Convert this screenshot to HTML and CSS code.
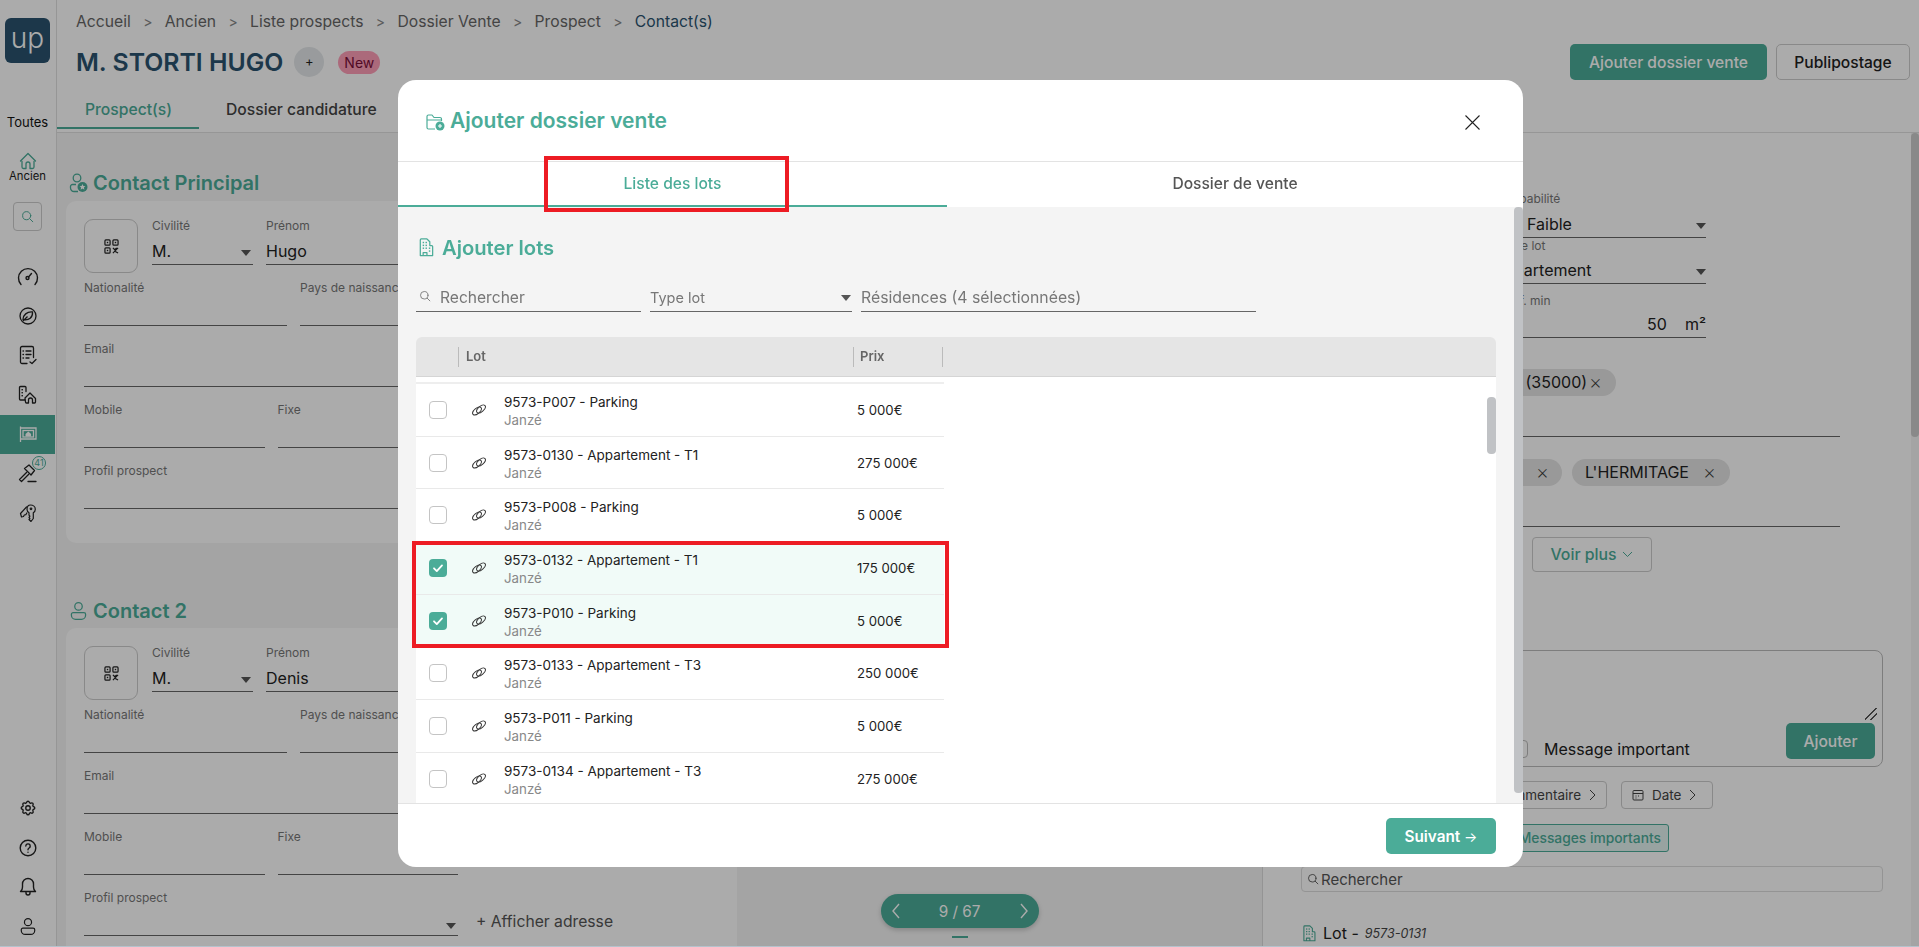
FILE: index.html
```html
<!DOCTYPE html>
<html lang="fr">
<head>
<meta charset="utf-8">
<title>Ajouter dossier vente</title>
<link rel="stylesheet" href="styles.css">
</head>
<body>
<svg class="defs" width="0" height="0">
  <defs>
    <symbol id="link" viewBox="0 0 16 16"><g fill="none" stroke="currentColor" stroke-width=".95"><ellipse cx="6" cy="9" rx="5.200" ry="2.700" transform="rotate(-40 6 9)"/><ellipse cx="10" cy="7" rx="5.200" ry="2.700" transform="rotate(-40 10 7)"/></g></symbol>
    <symbol id="check" viewBox="0 0 18 18"><path d="M5 9.3l2.8 2.8L13 6.4" fill="none" stroke="#fff" stroke-width="1.8" stroke-linecap="round" stroke-linejoin="round"/></symbol>
    <symbol id="qr" viewBox="0 0 16 16"><g fill="none" stroke="currentColor" stroke-width="1.3"><rect x="1" y="1" width="5.5" height="5.5" rx="1"/><rect x="9.5" y="1" width="5.5" height="5.5" rx="1"/><rect x="1" y="9.5" width="5.5" height="5.5" rx="1"/><path d="M9.5 9.5l2 2 2-2M15 9.5l-3.5 3.5M9.5 15l2-2 3.5 2"/></g><g fill="currentColor"><rect x="3" y="3" width="1.5" height="1.5"/><rect x="11.5" y="3" width="1.5" height="1.5"/><rect x="3" y="11.5" width="1.5" height="1.5"/></g></symbol>
    <symbol id="building" viewBox="0 0 16 20"><g fill="none" stroke="currentColor" stroke-width="1.3" stroke-linejoin="round"><path d="M2 18.5V2a1 1 0 0 1 1-1h6l3 3v4h2a1 1 0 0 1 1 1v9.500zM5 18.500v-3h4v3"/></g><g fill="currentColor"><rect x="4.500" y="4" width="1.500" height="1.500"/><rect x="7.500" y="4" width="1.500" height="1.500"/><rect x="4.500" y="7" width="1.500" height="1.500"/><rect x="7.500" y="7" width="1.500" height="1.500"/><rect x="4.500" y="10" width="1.500" height="1.500"/><rect x="7.500" y="10" width="1.500" height="1.500"/><rect x="11" y="10" width="1.500" height="1.500"/><rect x="11" y="13" width="1.500" height="1.500"/></g></symbol>
    <symbol id="user" viewBox="0 0 20 24"><g fill="none" stroke="currentColor" stroke-width="1.500"><circle cx="10" cy="6.500" r="4.500"/><path d="M3.500 14h13a2 2 0 0 1 2 2v1a5 5 0 0 1-5 5h-7a5 5 0 0 1-5-5v-1a2 2 0 0 1 2-2z"/></g></symbol>
    <symbol id="search" viewBox="0 0 16 16"><g fill="none" stroke="currentColor" stroke-width="1.200" stroke-linecap="round"><circle cx="7" cy="7" r="5"/><path d="M11 11l3.500 3.500"/></g></symbol>
  </defs>
</svg>

<div class="app">
  <aside class="side">
    <div class="logo">up</div>
    <div class="side-all">Toutes</div>
    <svg class="side-home" width="18" height="18" viewBox="0 0 18 18"><path d="M3 9.500V15a1.500 1.500 0 0 0 1.500 1.500h2.500V12a2 2 0 0 1 4 0v4.500h2.500A1.500 1.500 0 0 0 15 15V9.500M1.500 9 9 1.500 16.500 9" fill="none" stroke="#4bac98" stroke-width="1.300" stroke-linecap="round" stroke-linejoin="round"/></svg>
    <div class="side-label">Ancien</div>
    <div class="side-search"><svg width="13" height="13"><use href="#search"/></svg></div>
    <nav class="side-nav">
      <div class="nav-item"><svg width="22" height="20" viewBox="0 0 22 20"><g fill="none" stroke="currentColor" stroke-width="1.400" stroke-linecap="round"><path d="M4 17.500A9.500 9.500 0 1 1 18 17.500"/><circle cx="10.500" cy="11" r="1.500"/><path d="M11.500 10l3-3.500"/></g></svg></div>
      <div class="nav-item"><svg width="20" height="20" viewBox="0 0 20 20"><g fill="none" stroke="currentColor" stroke-width="1.300"><circle cx="10" cy="10" r="8"/><path d="M5 13.500C5 9 9 5.500 14.500 6 15 11 11 15 5 13.500zM5 15l4.500-4.500"/></g></svg></div>
      <div class="nav-item"><svg width="18" height="20" viewBox="0 0 18 20"><g fill="none" stroke="currentColor" stroke-width="1.300" stroke-linecap="round" stroke-linejoin="round"><path d="M8 18.500H3a1.500 1.500 0 0 1-1.500-1.500V3A1.500 1.500 0 0 1 3 1.500h10A1.500 1.500 0 0 1 14.500 3v9.500M7 6h5M7 9.500h5M7 13h3M11 17l2 1.500 4-4"/><path d="M4 6h.5M4 9.500h.5M4 13h.5"/></g></svg></div>
      <div class="nav-item"><svg width="19" height="19" viewBox="0 0 19 19"><g fill="none" stroke="currentColor" stroke-width="1.300" stroke-linecap="round" stroke-linejoin="round"><path d="M8 6.500V2.500a1 1 0 0 0-1-1H2.500a1 1 0 0 0-1 1V14a1 1 0 0 0 1 1h4M7 13l5-5 5.500 5.500v3.500a1 1 0 0 1-1 1h-2v-3a2 2 0 0 0-4 0v3h-2a1 1 0 0 1-1-1z"/></g><g fill="currentColor"><rect x="3.500" y="4" width="1.400" height="1.400"/><rect x="3.500" y="7" width="1.400" height="1.400"/><rect x="3.500" y="10" width="1.400" height="1.400"/></g></svg></div>
      <div class="nav-item nav-active"><svg width="18" height="18" viewBox="0 0 18 18"><g fill="none" stroke="currentColor" stroke-width="1.300"><path d="M1.500 17V1.500M1.500 3h15.500v11H1.500"/><rect x="4" y="5.500" width="10.500" height="6.500"/></g><path d="M9.300 6.500 6.500 9v2.500h5.600V9z" fill="currentColor"/></svg></div>
      <div class="nav-item nav-badge-host"><svg width="19" height="19" viewBox="0 0 19 19"><g fill="none" stroke="currentColor" stroke-width="1.300" stroke-linecap="round" stroke-linejoin="round"><path d="M6.500 4.500 11 1l5.500 5.500-3.500 4.500zM8.500 8.500l-7 7 2 2 7-7M10 17.500h8"/></g></svg><span class="nav-badge">41</span></div>
      <div class="nav-item"><svg width="18" height="18" viewBox="0 0 18 18"><g fill="none" stroke="currentColor" stroke-width="1.200" stroke-linejoin="round" stroke-linecap="round"><path d="M11.500 1c2.600 0 4.800 1.900 4.800 4.300 0 1.500-.8 2.700-2 3.400v5.800l-2.300 3-2-2 .9-1.100-.9-1 .9-1.200-.9-1V8.700c-1.200-.7-2-1.900-2-3.400C8 2.900 9 1 11.500 1z"/><path d="M7.500 3 1.500 9.500l1 3.500 2-.5.800-1.500 1.500-.3 1-1.700"/><circle cx="12" cy="4.800" r=".8"/></g></svg></div>
    </nav>
    <div class="side-bottom">
      <div class="nav-item"><svg width="18" height="18" viewBox="0 0 24 24"><g fill="none" stroke="currentColor" stroke-width="1.800" stroke-linejoin="round"><path d="M10.300 4.300c.4-1.800 3-1.800 3.400 0a1.700 1.700 0 0 0 2.600 1.100c1.500-.9 3.300.8 2.400 2.400a1.700 1.700 0 0 0 1 2.500c1.800.4 1.800 3 0 3.400a1.700 1.700 0 0 0-1 2.600c.9 1.500-.9 3.300-2.400 2.400a1.700 1.700 0 0 0-2.600 1c-.4 1.800-3 1.800-3.400 0a1.700 1.700 0 0 0-2.600-1c-1.500.9-3.300-.9-2.400-2.400a1.700 1.700 0 0 0-1-2.600c-1.800-.4-1.800-3 0-3.400a1.700 1.700 0 0 0 1-2.500c-.9-1.600.9-3.300 2.400-2.400a1.700 1.700 0 0 0 2.600-1.100z"/><circle cx="12" cy="12" r="3"/></g></svg></div>
      <div class="nav-item"><svg width="18" height="18" viewBox="0 0 18 18"><g fill="none" stroke="currentColor" stroke-width="1.400" stroke-linecap="round"><circle cx="9" cy="9" r="7.800"/><path d="M6.800 7a2.200 2.200 0 1 1 3.300 2c-.8.500-1.100.9-1.100 1.700M9 13.200v.1"/></g></svg></div>
      <div class="nav-item"><svg width="18" height="19" viewBox="0 0 18 19"><g fill="none" stroke="currentColor" stroke-width="1.400" stroke-linecap="round" stroke-linejoin="round"><path d="M1.500 14.500c1.500-1 2-2.500 2-4.500V7a5.500 5.500 0 0 1 11 0v3c0 2 .5 3.500 2 4.500zM7 15v1a2 2 0 0 0 4 0v-1"/></g></svg></div>
      <div class="nav-item"><svg width="16" height="19"><use href="#user"/></svg></div>
    </div>
  </aside>

  <main class="main">
    <header class="top">
      <div class="crumbs">
        <span>Accueil</span><i>&gt;</i><span>Ancien</span><i>&gt;</i><span>Liste prospects</span><i>&gt;</i><span>Dossier Vente</span><i>&gt;</i><span>Prospect</span><i>&gt;</i><span class="crumb-last">Contact(s)</span>
      </div>
      <div class="title-row">
        <h1>M. STORTI HUGO</h1>
        <span class="round-plus">+</span>
        <span class="pill-new">New</span>
        <span class="title-actions">
          <button class="btn btn-fill">Ajouter dossier vente</button>
          <button class="btn btn-line">Publipostage</button>
        </span>
      </div>
      <div class="page-tabs">
        <span class="page-tab page-tab-on">Prospect(s)</span>
        <span class="page-tab">Dossier candidature</span>
      </div>
    </header>

    <div class="content">
      <section class="col-left">
        <h2 class="contact-h"><svg width="19" height="20" viewBox="0 0 19 20"><g fill="none" stroke="currentColor" stroke-width="1.300"><circle cx="8" cy="5" r="3.800"/><path d="M7 11.500H3.500a2 2 0 0 0-2 2v1.500a3.500 3.500 0 0 0 3.500 3.500h4"/></g><circle cx="13.500" cy="14" r="5" fill="currentColor"/><path d="M13.500 11l.9 2 2.100.2-1.600 1.400.5 2.100-1.900-1.100-1.900 1.100.5-2.100-1.600-1.400 2.100-.2z" fill="#fff"/></svg>Contact Principal</h2>
        <div class="card">
          <div class="c-row c-first">
            <div class="qr"><svg width="15" height="15"><use href="#qr"/></svg></div>
            <div class="field f-civ"><label>Civilité</label><div class="val">M.<b class="caret"></b></div></div>
            <div class="field f-pre"><label>Prénom</label><div class="val">Hugo</div></div>
          </div>
          <div class="c-row"><div class="field f-nat"><label>Nationalité</label></div><div class="field f-pays"><label>Pays de naissance</label></div></div>
          <div class="c-row"><div class="field f-full"><label>Email</label></div></div>
          <div class="c-row"><div class="field f-half"><label>Mobile</label></div><div class="field f-half"><label>Fixe</label></div></div>
          <div class="c-row"><div class="field f-full"><label>Profil prospect</label></div></div>
        </div>

        <h2 class="contact-h contact-2"><svg width="19" height="20"><use href="#user"/></svg>Contact 2</h2>
        <div class="card">
          <div class="c-row c-first">
            <div class="qr"><svg width="15" height="15"><use href="#qr"/></svg></div>
            <div class="field f-civ"><label>Civilité</label><div class="val">M.<b class="caret"></b></div></div>
            <div class="field f-pre"><label>Prénom</label><div class="val">Denis</div></div>
          </div>
          <div class="c-row"><div class="field f-nat"><label>Nationalité</label></div><div class="field f-pays"><label>Pays de naissance</label></div></div>
          <div class="c-row"><div class="field f-full"><label>Email</label></div></div>
          <div class="c-row"><div class="field f-half"><label>Mobile</label></div><div class="field f-half"><label>Fixe</label></div></div>
          <div class="c-row c-profil"><div class="field f-full"><label>Profil prospect</label><div class="val"><b class="caret"></b></div></div><span class="addr">+ Afficher adresse</span></div>
        </div>
      </section>

      <section class="col-mid">
        <div class="pager"><svg width="10" height="18" viewBox="0 0 10 18"><path d="M8 2 2 9l6 7" fill="none" stroke="currentColor" stroke-width="1.400"/></svg><span>9 / 67</span><svg width="10" height="18" viewBox="0 0 10 18"><path d="M2 2l6 7-6 7" fill="none" stroke="currentColor" stroke-width="1.400"/></svg></div>
        <div class="pager-dash"></div>
      </section>

      <section class="col-right">
        <div class="rf rf-1"><label>Probabilité</label><div class="val"><span class="val-ind">Faible</span><b class="caret"></b></div></div>
        <div class="rf rf-2"><label>Type lot</label><div class="val"><span class="val-out">Appartement</span><b class="caret"></b></div></div>
        <div class="rf rf-3"><label>Surf. min</label><div class="val val-num">50<span class="unit">m²</span></div></div>
        <div class="chips chips-1"><span class="chip chip-a">JANZÉ (35000)<em>×</em></span></div>
        <div class="chips chips-2"><span class="chip chip-b">LES PRÉS<em>×</em></span><span class="chip chip-c">L'HERMITAGE<em>×</em></span></div>
        <button class="btn-more">Voir plus <svg width="11" height="7" viewBox="0 0 11 7"><path d="M1 1l4.500 4.500L10 1" fill="none" stroke="currentColor" stroke-width="1"/></svg></button>
        <div class="note">
          <div class="grip"></div>
          <div class="note-foot">
            <span class="note-check"></span><span class="note-msg">Message important</span>
            <button class="btn btn-fill btn-add">Ajouter</button>
          </div>
        </div>
        <div class="filters">
          <span class="fbtn fbtn-a">Commentaire <svg width="7" height="12" viewBox="0 0 7 12"><path d="M1 1l5 5-5 5" fill="none" stroke="currentColor"/></svg></span>
          <span class="fbtn fbtn-b"><svg width="12" height="12" viewBox="0 0 12 12"><g fill="none" stroke="currentColor"><rect x="1" y="1.500" width="10" height="9.500" rx="1"/><path d="M1 4.500h10M3.500 7h1M6 7h1M3.500 9h1"/></g></svg>Date <svg width="7" height="12" viewBox="0 0 7 12"><path d="M1 1l5 5-5 5" fill="none" stroke="currentColor"/></svg></span>
        </div>
        <div class="msg-row"><span class="msg-btn">Messages importants</span></div>
        <div class="r-search"><svg width="12" height="12"><use href="#search"/></svg>Rechercher</div>
        <div class="lot-line"><svg class="lot-ic" width="14" height="17"><use href="#building"/></svg><span>Lot -</span><em>9573-0131</em></div>
      </section>
      <div class="page-scroll"><div class="page-thumb"></div></div>
    </div>
  </main>
</div>

<div class="overlay"></div>

<div class="modal">
  <div class="m-head">
    <h3><svg width="19" height="17" viewBox="0 0 19 17"><g fill="none" stroke="currentColor" stroke-width="1.200" stroke-linejoin="round"><path d="M9 15H2.500A1.500 1.500 0 0 1 1 13.500v-11A1.500 1.500 0 0 1 2.500 1H6l2 2.500h6A1.500 1.500 0 0 1 15.500 5v2M1 6h14"/></g><circle cx="14" cy="12" r="4.500" fill="currentColor"/><path d="M14 10v4M12 12h4" stroke="#fff" stroke-width="1.100"/></svg>Ajouter dossier vente</h3>
    <svg class="m-close" width="15" height="15" viewBox="0 0 15 15"><path d="M.5.500l14 14M14.500.500l-14 14" stroke="#222" stroke-width="1.100"/></svg>
  </div>
  <div class="m-tabs">
    <span class="m-tab m-tab-on">Liste des lots</span>
    <span class="m-tab">Dossier de vente</span>
  </div>
  <div class="m-body">
    <div class="m-inner">
      <h4><svg width="16" height="19"><use href="#building"/></svg>Ajouter lots</h4>
      <div class="m-filters">
        <div class="mf mf-search"><svg width="12" height="12"><use href="#search"/></svg>Rechercher</div>
        <div class="mf mf-type">Type lot<b class="caret"></b></div>
        <div class="mf mf-res">Résidences (4 sélectionnées)</div>
      </div>
      <div class="t-head">
        <span class="th th-check"></span><span class="th th-lot">Lot</span><span class="th th-prix">Prix</span>
      </div>
      <div class="t-body">
        <div class="t-stub"></div>
        <div class="t-row"><span class="cb"></span><svg class="lnk" width="16" height="16"><use href="#link"/></svg><div class="t-txt"><strong>9573-P007 - Parking</strong><small>Janzé</small></div><span class="t-prix">5 000€</span></div>
        <div class="t-row"><span class="cb"></span><svg class="lnk" width="16" height="16"><use href="#link"/></svg><div class="t-txt"><strong>9573-0130 - Appartement - T1</strong><small>Janzé</small></div><span class="t-prix">275 000€</span></div>
        <div class="t-row"><span class="cb"></span><svg class="lnk" width="16" height="16"><use href="#link"/></svg><div class="t-txt"><strong>9573-P008 - Parking</strong><small>Janzé</small></div><span class="t-prix">5 000€</span></div>
        <div class="t-row t-sel"><span class="cb cb-on"><svg width="18" height="18"><use href="#check"/></svg></span><svg class="lnk" width="16" height="16"><use href="#link"/></svg><div class="t-txt"><strong>9573-0132 - Appartement - T1</strong><small>Janzé</small></div><span class="t-prix">175 000€</span></div>
        <div class="t-row t-sel"><span class="cb cb-on"><svg width="18" height="18"><use href="#check"/></svg></span><svg class="lnk" width="16" height="16"><use href="#link"/></svg><div class="t-txt"><strong>9573-P010 - Parking</strong><small>Janzé</small></div><span class="t-prix">5 000€</span></div>
        <div class="t-row"><span class="cb"></span><svg class="lnk" width="16" height="16"><use href="#link"/></svg><div class="t-txt"><strong>9573-0133 - Appartement - T3</strong><small>Janzé</small></div><span class="t-prix">250 000€</span></div>
        <div class="t-row"><span class="cb"></span><svg class="lnk" width="16" height="16"><use href="#link"/></svg><div class="t-txt"><strong>9573-P011 - Parking</strong><small>Janzé</small></div><span class="t-prix">5 000€</span></div>
        <div class="t-row"><span class="cb"></span><svg class="lnk" width="16" height="16"><use href="#link"/></svg><div class="t-txt"><strong>9573-0134 - Appartement - T3</strong><small>Janzé</small></div><span class="t-prix">275 000€</span></div>
        <div class="t-thumb"></div>
      </div>
    </div>
    <div class="m-scroll"></div>
  </div>
  <div class="m-foot"><button class="btn-next">Suivant <span>→</span></button></div>
</div>

<div class="mark mark-tab"></div>
<div class="mark mark-rows"></div>
<div class="edge"></div>
</body>
</html>
```

FILE: styles.css
```css
* { box-sizing: border-box; }
html, body { margin: 0; height: 100%; overflow: hidden; }
body { font-family: Inter, "Noto Sans", sans-serif; color: #222; background: #fff; }
.defs { position: absolute; }
button { font-family: inherit; }
h1, h2, h3, h4 { margin: 0; }

.app { display: flex; height: 947px; }

/* sidebar */
.side { width: 57px; flex: none; background: #fff; border-right: 1px solid #e0e0e0; display: flex; flex-direction: column; align-items: center; padding-right: 1px; }
.logo { width: 45px; height: 45px; margin-top: 18px; background: #2a536f; border-radius: 6px; color: #fff; font-size: 28px; line-height: 40px; text-align: center; font-weight: 300; }
.side-all { margin-top: 51px; font-size: 13px; line-height: 16px; color: #111; }
.side-home { margin-top: 22px; }
.side-label { font-size: 11.300px; line-height: 13px; color: #222; }
.side-search { width: 29px; height: 29px; margin-top: 19px; border: 1px solid #ccc; border-radius: 4px; display: flex; align-items: center; justify-content: center; color: #4bac98; }
.side-nav { margin-top: 26px; width: 100%; display: flex; flex-direction: column; }
.nav-item { height: 39.400px; display: flex; align-items: center; justify-content: center; color: #222; position: relative; }
.nav-active { background: #4bac98; color: #fff; }
.nav-badge { position: absolute; left: 32px; top: 2px; width: 14px; height: 14px; border: 1px solid #4bac98; border-radius: 50%; background: #fff; color: #4bac98; font-size: 9px; line-height: 12px; text-align: center; }
.side-bottom { margin-top: auto; width: 100%; padding-bottom: 1px; }

/* main */
.main { flex: 1; min-width: 0; display: flex; flex-direction: column; }
.top { height: 133px; flex: none; padding: 12px 0 0 19px; border-bottom: 1px solid #e0e0e0; background: #fff; }
.crumbs { display: flex; align-items: center; height: 18px; font-size: 15.700px; color: #666; }
.crumbs i { font-style: normal; width: 34px; text-align: center; color: #888; font-size: 14px; }
.crumb-last { color: #2a536f; }
.title-row { display: flex; align-items: center; height: 36px; margin-top: 14px; }
h1 { font-size: 24.800px; font-weight: 600; color: #2a536f; line-height: 36px; }
.round-plus { width: 30px; height: 30px; margin-left: 11px; border-radius: 50%; background: #e4e8ea; font-size: 13px; line-height: 29px; text-align: center; color: #222; }
.pill-new { width: 42px; height: 23px; margin-left: 14px; border-radius: 12px; background: #ff9eb8; font-size: 14px; line-height: 23px; text-align: center; color: #7a1038; }
.title-actions { margin-left: auto; display: flex; gap: 9px; padding-right: 9px; }
.btn { height: 36px; border-radius: 5px; font-size: 15.600px; font-weight: 500; padding: 0; }
.btn-fill { background: #4bac98; border: 0; color: #fff; }
.title-actions .btn-fill { width: 197px; }
.btn-line { width: 134px; background: #fff; border: 1px solid #ccc; color: #222; }
.page-tabs { display: flex; margin: 9px 0 0 -19px; height: 40px; }
.page-tab { font-size: 15.700px; font-weight: 500; line-height: 41px; padding: 0 27px; color: #444; }
.page-tab-on { color: #4bac98; width: 142px; height: 40px; border-bottom: 2px solid #4bac98; padding-left: 28px; }
.page-tab + .page-tab { padding-left: 27px; }

.content { flex: 1; min-height: 0; display: flex; background: #f5f5f5; }
.col-left { width: 680px; flex: none; padding: 38px 0 0 9px; }
.contact-h { display: flex; align-items: center; gap: 5px; height: 24px; font-size: 20px; font-weight: 600; color: #4bac98; margin-bottom: 6px; margin-left: 3px; }
.contact-2 { margin-top: 56px; margin-bottom: 5px; }
.card { background: #fff; border-radius: 10px 0 0 10px; height: 342px; padding: 18px; }
.c-row { display: flex; gap: 13px; width: 374px; margin-top: 16px; }
.c-first { margin-top: 0; height: 62px; }
.c-first + .c-row { margin-top: 0; }
.qr { width: 54px; height: 54px; flex: none; border: 1px solid #ccc; border-radius: 9px; display: flex; align-items: center; justify-content: center; color: #222; margin-right: 1px; }
.field { height: 45px; border-bottom: 1px solid #666; display: flex; flex-direction: column; flex: none; }
.c-first .field { height: 46px; }
.field label, .rf label { display: block; font-size: 12px; line-height: 14px; color: #777; }
.val { font-size: 16px; line-height: 20px; color: #222; position: relative; margin-top: 9px; }
.c-first .val { margin-top: 8px; }
.caret { position: absolute; right: 2px; top: 9px; width: 0; height: 0; border-left: 5.500px solid transparent; border-right: 5.500px solid transparent; border-top: 6px solid #555; }
.f-civ { width: 101px; }
.f-pre { width: 192px; }
.f-nat { width: 203px; }
.f-pays { width: 158px; }
.f-full { width: 374px; }
.f-half { width: 180.500px; }
.c-profil { width: 560px; gap: 18px; align-items: flex-end; }
.addr { font-size: 15.700px; color: #555; line-height: 20px; white-space: nowrap; padding-bottom: 4px; }

.col-mid { width: 525px; flex: none; display: flex; flex-direction: column; align-items: center; justify-content: flex-end; padding: 0 80px 9px 0; }
.pager { width: 158px; height: 34px; border-radius: 17px; background: #4bac98; color: #fff; display: flex; align-items: center; justify-content: space-between; padding: 0 10px; font-size: 15.300px; box-shadow: 0 2px 5px rgba(0,0,0,.2); }
.pager-dash { width: 16px; height: 2px; background: #4bac98; margin-top: 8px; }

.col-right { width: 649px; flex: none; padding: 59px 0 0 38px; background: #fff; border-left: 1px solid #ddd; }
.rf { width: 206px; margin-left: 199px; border-bottom: 1px solid #666; height: 46px; }
.rf .val { margin-top: 8px; }
.rf-2 { margin-top: 1px; height: 45px; }
.rf-2 .val { margin-top: 7px; }
.rf-3 { margin-top: 10px; height: 44px; }
.rf-3 .val { margin-top: 6px; }
.val-ind { padding-left: 27px; }
.val-out { margin-left: -7px; }
.val-num { text-align: right; }
.unit { margin-left: 18px; }
.rf .caret { right: 0; }
.chips { display: flex; gap: 10px; width: 539px; border-bottom: 1px solid #666; }
.chips-1 { margin-top: 31px; height: 68px; }
.chips-2 { margin-top: 22px; height: 68px; }
.chip { height: 27px; border-radius: 14px; background: #e4e4e4; font-size: 16px; line-height: 27px; color: #222; padding: 0 13px; white-space: nowrap; display: inline-flex; align-items: center; }
.chip em { font-style: normal; font-size: 20px; font-weight: 200; margin-left: 14px; color: #333; }
.chip-a { margin-left: 100px; padding-right: 14px; width: 215px; justify-content: flex-end; }
.chip-a em { margin-left: 2px; }
.chip-b { margin-left: 100px; width: 161px; justify-content: flex-end; }
.chip-c { width: 158px; }
.btn-more { display: flex; align-items: center; justify-content: center; gap: 6px; margin: 10px 0 0 231px; width: 120px; height: 35px; border: 1px solid #ccc; border-radius: 4px; background: #fff; color: #4bac98; font-size: 15.800px; font-weight: 500; padding: 0; }
.note { width: 582px; height: 117px; margin-top: 78px; border: 1px solid #bbb; border-radius: 8px; position: relative; display: flex; align-items: flex-end; padding: 0 7px 6px 0; }
.grip { position: absolute; right: 5px; top: 57px; width: 12px; height: 12px; background: linear-gradient(135deg, transparent 45%, #555 45%, #555 53%, transparent 53%, transparent 68%, #555 68%, #555 76%, transparent 76%); }
.note-foot { display: flex; align-items: flex-end; width: 100%; }
.note-check { width: 18px; height: 18px; margin: 0 0 2px 208px; border: 1px solid #bbb; border-radius: 4px; }
.note-msg { margin: 0 0 1px 16px; font-size: 16px; line-height: 20px; color: #222; }
.btn-add { margin-left: auto; width: 89px; margin-bottom: 1px; }
.filters { display: flex; gap: 14px; margin-top: 14px; height: 28px; }
.fbtn { display: inline-flex; align-items: center; gap: 8px; height: 28px; border: 1px solid #ccc; border-radius: 4px; font-size: 13.500px; color: #444; padding: 0 10px; }
.fbtn-a { margin-left: 126px; width: 180px; justify-content: flex-end; }
.fbtn-b { width: 92px; }
.msg-row { margin-top: 15px; height: 28px; }
.msg-btn { display: inline-block; margin-left: 150px; height: 28px; padding: 0 7px; border: 1px solid #4bac98; border-radius: 3px; background: #e3f3f0; color: #4bac98; font-size: 13.800px; font-weight: 500; line-height: 26px; width: 218px; text-align: right; }
.r-search { display: flex; align-items: center; gap: 2px; width: 582px; height: 26px; margin-top: 14px; border: 1px solid #ddd; border-radius: 4px; padding-left: 5px; font-size: 15px; color: #555; }
.lot-line { display: flex; align-items: center; margin-top: 31px; height: 20px; font-size: 16px; color: #222; }
.lot-ic { color: #4bac98; margin: 0 7px 0 1px; }
.lot-line em { font-size: 12.500px; margin-left: 6px; color: #444; }
.page-scroll { width: 8px; flex: none; background: #f5f5f5; }
.page-thumb { width: 8px; height: 304px; background: #ccc; border-radius: 4px; }

/* overlay */
.overlay { position: fixed; inset: 0; background: rgba(0,0,0,.33); }
.edge { position: fixed; left: 0; right: 0; bottom: 0; height: 1px; background: #b4c2cc; }

/* modal */
.modal { position: fixed; left: 398px; top: 80px; width: 1125px; height: 787px; background: #fff; border-radius: 18px; overflow: hidden; display: flex; flex-direction: column; }
.m-head { height: 82px; flex: none; border-bottom: 1px solid #e3e3e3; display: flex; align-items: center; justify-content: space-between; padding: 0 43px 0 28px; }
.m-head h3 { display: flex; align-items: center; gap: 5px; font-size: 21px; font-weight: 600; color: #4bac98; }
.m-head h3 svg { margin-top: 4px; }
.m-close { margin-top: 3px; }
.m-tabs { height: 45px; flex: none; display: flex; }
.m-tab { text-align: center; font-size: 15.600px; font-weight: 500; color: #555; line-height: 43px; }
.m-tab-on { width: 549px; color: #4bac98; border-bottom: 2px solid #4bac98; }
.m-tab:not(.m-tab-on) { width: 576px; background: #fff; }
.m-body { flex: 1; min-height: 0; background: #f4f4f4; display: flex; }
.m-inner { flex: 1; min-width: 0; padding: 0 0 0 18px; display: flex; flex-direction: column; overflow: hidden; }
.m-scroll { width: 9px; height: 586px; background: #c0c2c5; border-radius: 4px; flex: none; }
h4 { display: flex; align-items: center; gap: 8px; height: 24px; margin-top: 28px; margin-left: 2px; font-size: 20.200px; font-weight: 600; color: #4bac98; }
.m-filters { display: flex; gap: 9px; height: 27px; margin-top: 26px; flex: none; }
.mf { border-bottom: 1px solid #666; font-size: 15.600px; line-height: 20px; color: #777; position: relative; height: 27px; padding-top: 3px; }
.mf-search { width: 225px; display: flex; align-items: flex-start; gap: 9px; padding-left: 3px; }
.mf-search svg { margin-top: 2px; }
.mf-type { width: 202px; font-size: 14.500px; }
.mf-type .caret { top: 10px; right: 1px; }
.mf-res { width: 395px; font-size: 15.800px; }
.t-head { display: flex; width: 1080px; height: 40px; margin-top: 25px; flex: none; background: #e5e5e5; border-radius: 6px 6px 0 0; border-bottom: 1px solid #d5d5d5; align-items: center; font-size: 13px; font-weight: 600; color: #666; }
.th { height: 20px; line-height: 19px; }
.th-check { width: 42px; }
.th-lot { width: 395px; border-left: 1px solid #bbb; padding-left: 7px; }
.th-prix { width: 90px; border-left: 1px solid #bbb; border-right: 1px solid #bbb; padding-left: 6px; }
.t-body { width: 1080px; flex: 1; min-height: 0; background: #fff; position: relative; overflow: hidden; }
.t-stub { height: 7px; width: 528px; border-bottom: 2px solid #eee; }
.t-row { width: 528px; height: 52.700px; border-bottom: 1px solid #e9e9e9; display: flex; align-items: center; }
.t-sel { background: #f1fbf8; }
.cb { width: 18px; height: 18px; flex: none; margin: 0 0 0 13px; border: 1.500px solid #c4c4c4; border-radius: 4px; background: #fff; }
.cb-on { background: #4bac98; border: 0; }
.cb-on svg { display: block; }
.lnk { flex: none; margin-left: 24px; color: #333; }
.t-txt { width: 353px; margin-left: 17px; padding-top: 2px; display: flex; flex-direction: column; }
.t-txt strong { font-size: 13.500px; font-weight: 400; line-height: 18px; color: #222; }
.t-txt small { font-size: 13.300px; line-height: 18px; color: #888; }
.t-prix { font-size: 13.200px; color: #222; }
.t-thumb { position: absolute; right: 0; top: 20px; width: 9px; height: 57px; background: #c0c2c5; border-radius: 4px; }
.m-foot { height: 64px; flex: none; border-top: 1px solid #e3e3e3; display: flex; justify-content: flex-end; align-items: flex-start; padding: 14px 27px 0 0; }
.btn-next { width: 110px; height: 36px; border: 0; border-radius: 5px; background: #4bac98; color: #fff; font-size: 15.300px; font-weight: 600; padding: 0; }
.btn-next span { font-weight: 400; font-size: 14px; }

/* red annotations drawn over the screenshot */
.mark { position: fixed; border: 4px solid #ed1c24; }
.mark-tab { left: 544px; top: 156px; width: 245px; height: 56px; }
.mark-rows { left: 412px; top: 541px; width: 537px; height: 107px; }
```
